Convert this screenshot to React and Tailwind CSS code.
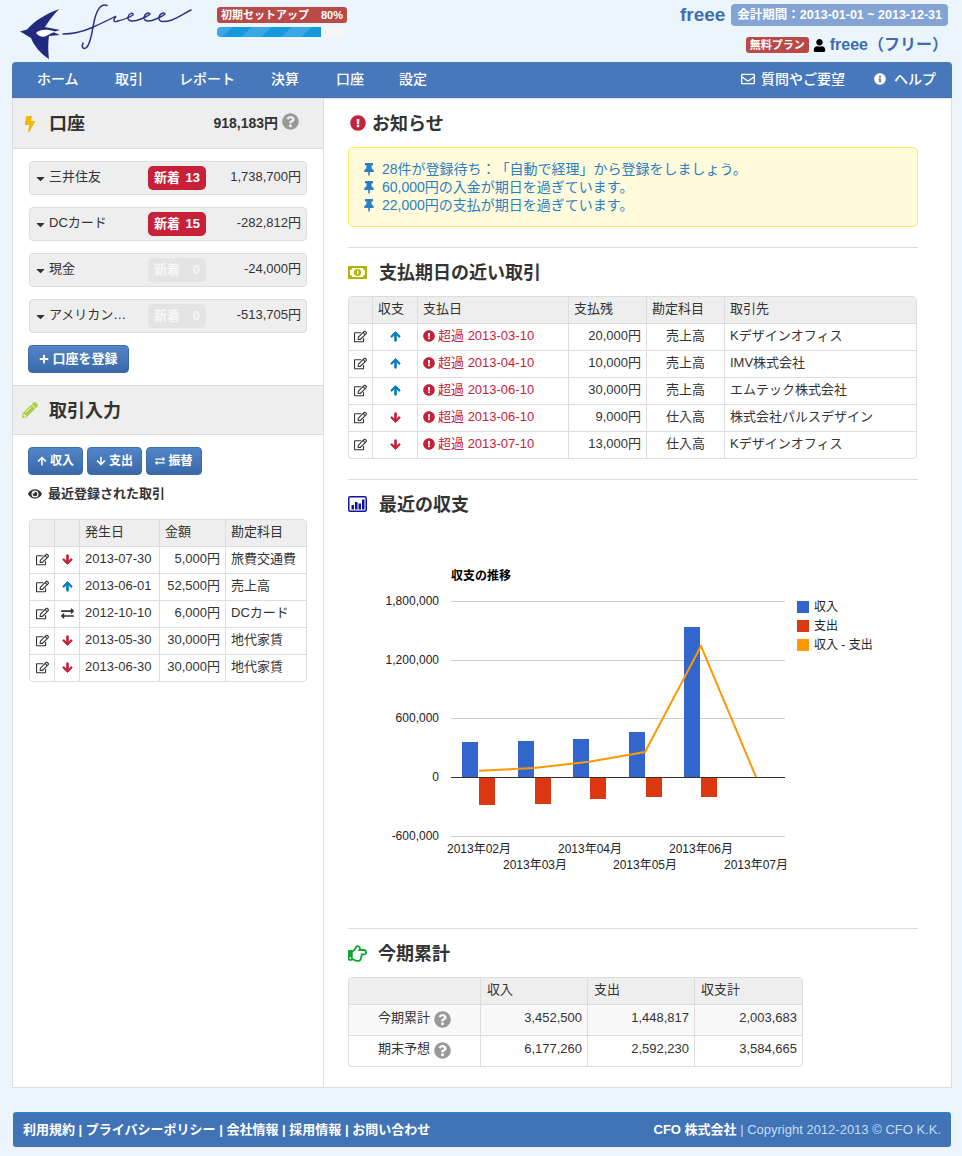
import {
  FaBolt, FaQuestionCircle, FaCaretDown, FaPlus, FaPencilAlt, FaArrowUp, FaArrowDown,
  FaExchangeAlt, FaEye, FaRegEdit, FaThumbtack, FaExclamationCircle,
  FaRegHandPointRight, FaUser, FaInfoCircle, FaRegEnvelope,
} from "react-icons/fa";

const ACCOUNTS = [
  { name: "三井住友", count: 13, amount: "1,738,700円" },
  { name: "DCカード", count: 15, amount: "-282,812円" },
  { name: "現金", count: 0, amount: "-24,000円" },
  { name: "アメリカン…", count: 0, amount: "-513,705円" },
];

const RECENT = [
  { dir: "down", date: "2013-07-30", amount: "5,000円", item: "旅費交通費" },
  { dir: "up", date: "2013-06-01", amount: "52,500円", item: "売上高" },
  { dir: "swap", date: "2012-10-10", amount: "6,000円", item: "DCカード" },
  { dir: "down", date: "2013-05-30", amount: "30,000円", item: "地代家賃" },
  { dir: "down", date: "2013-06-30", amount: "30,000円", item: "地代家賃" },
];

const DUE = [
  { dir: "up", date: "2013-03-10", amount: "20,000円", item: "売上高", partner: "Kデザインオフィス" },
  { dir: "up", date: "2013-04-10", amount: "10,000円", item: "売上高", partner: "IMV株式会社" },
  { dir: "up", date: "2013-06-10", amount: "30,000円", item: "売上高", partner: "エムテック株式会社" },
  { dir: "down", date: "2013-06-10", amount: "9,000円", item: "仕入高", partner: "株式会社パルスデザイン" },
  { dir: "down", date: "2013-07-10", amount: "13,000円", item: "仕入高", partner: "Kデザインオフィス" },
];

const BARS = [
  { x: 462, top: 742, bottom: 805 },
  { x: 518, top: 741, bottom: 804 },
  { x: 573, top: 739, bottom: 799 },
  { x: 629, top: 732, bottom: 797 },
  { x: 684, top: 627, bottom: 797 },
];

const Y_AXIS = [
  { y: 601, label: "1,800,000" },
  { y: 660, label: "1,200,000" },
  { y: 718, label: "600,000" },
  { y: 836, label: "-600,000" },
];

const X_AXIS = [
  { x: 479, y: 853, label: "2013年02月" },
  { x: 535, y: 869, label: "2013年03月" },
  { x: 590, y: 853, label: "2013年04月" },
  { x: 645, y: 869, label: "2013年05月" },
  { x: 701, y: 853, label: "2013年06月" },
  { x: 756, y: 869, label: "2013年07月" },
];

function Logo() {
  return (
    <svg width="190" height="62" viewBox="0 0 190 62" className="ml-[12px] shrink-0">
      <path fill="#222a80" d="M8 31.5 L15 29.5 C22 21 34 14 47 9 C41 15 36 22 33 27 L48 30 L41 32 L48 35 L37 36 C36 42 36 52 37 59 C29 54 22 46 19 38 C15 36 11 33 8 31.5 Z" />
      <path fill="#fff" d="M24 33 C28 29 36 29 43 31.5 L36 35 C32 38 27 37 24 33 Z" />
      <path fill="none" stroke="#2a3088" strokeWidth="1.5" strokeLinecap="round" d="M51 34 C62 34 72 31 79 28 M95 5.5 C88 3 84 12 82 22 C80 32 79 42 75 47 C72 50 69 48 71 43" />
      <path fill="none" stroke="#2a3088" strokeWidth="1.4" strokeLinecap="round" d="M79 28 C88 24 97 20 104 16 C101 20 101 23 106 21 C110 20 118 17 121 15 C122 12 117 13 116 17 C115 22 122 22 129 19 C134 17 137 15 138 14 C138 12 133 13 132 17 C131 22 138 22 144 19 C149 17 152 15 153 14 C153 12 148 13 147 17 C146 23 153 22 160 20 C167 17 173 13 179 10" />
    </svg>
  );
}

function Header() {
  return (
    <div className="flex h-[62px] justify-between pr-[14px]">
      <div className="flex">
        <Logo />
        <div className="ml-[15px] w-[130px] pt-[7px]">
          <div className="flex h-[16px] items-center justify-between rounded-[3px] bg-[#b94a48] px-[4px] text-[11px] font-bold text-white">
            <span>初期セットアップ</span>
            <span>80%</span>
          </div>
          <div className="mt-[4px] h-[10px] overflow-hidden rounded-[4px] bg-[#f5f5f5]">
            <div className="h-full w-[80%] bg-[repeating-linear-gradient(-45deg,#149bdf_0,#149bdf_14px,#3aa9e3_14px,#3aa9e3_28px)]" />
          </div>
        </div>
      </div>
      <div className="flex flex-col items-end pt-[4px]">
        <div className="flex h-[22px] items-center">
          <span className="text-[19px] font-bold text-[#3f6fb0]">freee</span>
          <span className="ml-[6px] flex h-[22px] items-center rounded-[4px] bg-[#83a4d4] px-[6px] text-[12.5px] font-bold text-white">
            会計期間：2013-01-01 ~ 2013-12-31
          </span>
        </div>
        <div className="mt-[11px] flex h-[16px] items-center">
          <span className="flex h-[16px] items-center rounded-[3px] bg-[#b94a48] px-[4px] text-[11px] font-bold text-white">無料プラン</span>
          <FaUser className="ml-[4px] text-[13px] text-black" />
          <span className="ml-[4px] text-[16px] font-bold text-[#3d6cb0]">freee（フリー）</span>
        </div>
      </div>
    </div>
  );
}

function Nav() {
  return (
    <div className="ml-[12px] mr-[10px] flex h-[36px] items-center justify-between rounded-t-[4px] bg-[#4878bc] pb-[2px] pl-[25px] pr-[16px] text-[14px] font-medium text-white">
      <div className="flex">
        <span className="w-[78px]">ホーム</span>
        <span className="w-[64px]">取引</span>
        <span className="w-[92px]">レポート</span>
        <span className="w-[65px]">決算</span>
        <span className="w-[63px]">口座</span>
        <span>設定</span>
      </div>
      <div className="flex items-center">
        <FaRegEnvelope className="text-[14px]" />
        <span className="ml-[6px]">質問やご要望</span>
        <FaInfoCircle className="ml-[29px] text-[12px]" />
        <span className="ml-[8px]">ヘルプ</span>
      </div>
    </div>
  );
}

function DirIcon({ dir }) {
  if (dir === "up") return <FaArrowUp className="mx-auto stroke-current stroke-[40] text-[11px] text-[#0480be]" />;
  if (dir === "down") return <FaArrowDown className="mx-auto stroke-current stroke-[40] text-[11px] text-[#c7213a]" />;
  return <FaExchangeAlt className="mx-auto text-[13px] text-[#333]" />;
}

function Help() {
  return <FaQuestionCircle className="inline-block text-[17px] text-[#999]" />;
}

function MoneyIcon() {
  return (
    <svg width="19" height="13" viewBox="0 0 19 13" className="shrink-0">
      <rect width="19" height="13" fill="#b3b300" />
      <path fill="#fff" d="M4 2 H15 C15 3.500 16 4 17 4 V9 C16 9 15 9.500 15 11 H4 C4 9.500 3 9 2 9 V4 C3 4 4 3.500 4 2 Z" />
      <circle cx="9.500" cy="6.500" r="3.600" fill="#b3b300" />
      <rect x="9" y="4.500" width="1.400" height="4" fill="#fff" />
    </svg>
  );
}

function ChartIcon() {
  return (
    <svg width="19" height="16" viewBox="0 0 19 16" className="shrink-0">
      <rect x="0.750" y="0.750" width="17.500" height="14.500" rx="1.500" fill="none" stroke="#12129a" strokeWidth="1.500" />
      <rect x="3.500" y="9" width="2.500" height="4.500" fill="#12129a" />
      <rect x="7" y="6" width="2.500" height="7.500" fill="#12129a" />
      <rect x="10.500" y="7.500" width="2.500" height="6" fill="#12129a" />
      <rect x="14" y="3.500" width="2.500" height="10" fill="#12129a" />
    </svg>
  );
}

function SideHeading({ icon, title, right, className }) {
  return (
    <div className={`flex h-[50px] items-center border-b border-[#ddd] bg-[#eee] ${className}`}>
      <span className="flex w-[36px] justify-center pr-[3px]">{icon}</span>
      <span className="pt-[2px] text-[18px] font-bold text-[#333]">{title}</span>
      {right}
    </div>
  );
}

function AccountRow({ account }) {
  const active = account.count > 0;
  return (
    <div className="flex h-[34px] items-center rounded-[4px] border border-[#ddd] bg-[#eee] pl-[6px] pr-[5px] text-[13px] text-[#333]">
      <FaCaretDown className="w-[9px] text-[13px]" />
      <span className="ml-[4px] w-[99px] truncate pb-[2px]">{account.name}</span>
      <span className={`flex h-[24px] w-[58px] items-center justify-between rounded-[5px] px-[6px] text-[13px] font-bold ${active ? "bg-[#c7213a] text-white" : "bg-[#e4e4e4] text-[#f7f7f7]"}`}>
        <span>新着</span>
        <span>{account.count}</span>
      </span>
      <span className="ml-auto pb-[2px]">{account.amount}</span>
    </div>
  );
}

function BlueButton({ className, children }) {
  return (
    <span className={`flex h-[28px] items-center justify-center gap-[3px] rounded-[4px] border border-[#3f6dab] bg-gradient-to-b from-[#5285c8] to-[#3a69a9] text-[12px] font-bold text-white ${className}`}>
      {children}
    </span>
  );
}

function Sidebar() {
  return (
    <div className="w-[311px] shrink-0 border-r border-[#ddd]">
      <SideHeading
        icon={<FaBolt className="text-[16px] text-[#f5b800]" />}
        title="口座"
        right={
          <span className="ml-auto flex items-center pr-[24px] text-[14px] font-bold text-[#333]">
            918,183円
            <span className="ml-[4px] flex -translate-y-[2px]"><Help /></span>
          </span>
        }
      />
      <div className="px-[15px] pb-[12px] pt-[12px]">
        <div className="ml-[1px] flex w-[278px] flex-col gap-[12px]">
          {ACCOUNTS.map((a) => <AccountRow key={a.name} account={a} />)}
        </div>
        <BlueButton className="mt-[12px] w-[101px] text-[13px]">
          <FaPlus className="text-[10px]" />
          口座を登録
        </BlueButton>
      </div>
      <SideHeading
        className="border-t"
        icon={<FaPencilAlt className="text-[16px] text-[#a9d03f]" />}
        title="取引入力"
      />
      <div className="px-[15px] pt-[12px]">
        <div className="flex gap-[4px]">
          <BlueButton className="w-[55px]"><FaArrowUp className="text-[10px]" />収入</BlueButton>
          <BlueButton className="w-[55px]"><FaArrowDown className="text-[10px]" />支出</BlueButton>
          <BlueButton className="w-[56px]"><FaExchangeAlt className="text-[10px]" />振替</BlueButton>
        </div>
        <div className="mt-[9px] flex h-[20px] items-center text-[13px] font-bold text-[#333]">
          <FaEye className="text-[14px]" />
          <span className="ml-[6px]">最近登録された取引</span>
        </div>
        <div className="ml-[1px] mt-[15px] w-[278px] overflow-hidden rounded-[4px] border border-[#ddd]">
          <table className="w-full table-fixed border-separate border-spacing-0 text-[13px] text-[#333]">
            <colgroup>
              <col className="w-[24px]" />
              <col className="w-[25px]" />
              <col className="w-[80px]" />
              <col className="w-[66px]" />
              <col />
            </colgroup>
            <thead>
              <tr className="bg-[#eee] text-left font-normal">
                <th className="h-[26px] font-normal" />
                <th className="h-[26px] border-l border-[#ddd] font-normal" />
                <th className="h-[26px] border-l border-[#ddd] pb-[2px] pl-[5px] font-normal">発生日</th>
                <th className="h-[26px] border-l border-[#ddd] pb-[2px] pl-[5px] font-normal">金額</th>
                <th className="h-[26px] border-l border-[#ddd] pb-[2px] pl-[5px] font-normal">勘定科目</th>
              </tr>
            </thead>
            <tbody>
              {RECENT.map((r) => (
                <tr key={r.date}>
                  <td className="h-[27px] border-t border-[#ddd] pb-[2px]"><FaRegEdit className="mx-auto text-[13px]" /></td>
                  <td className="h-[27px] border-l border-t border-[#ddd] pb-[2px]"><DirIcon dir={r.dir} /></td>
                  <td className="h-[27px] whitespace-nowrap border-l border-t border-[#ddd] pb-[2px] pl-[5px]">{r.date}</td>
                  <td className="h-[27px] border-l border-t border-[#ddd] pb-[2px] pr-[5px] text-right">{r.amount}</td>
                  <td className="h-[27px] whitespace-nowrap border-l border-t border-[#ddd] pb-[2px] pl-[5px]">{r.item}</td>
                </tr>
              ))}
            </tbody>
          </table>
        </div>
      </div>
    </div>
  );
}

function Heading({ icon, title, gap }) {
  return (
    <div className="flex h-[48px] items-center">
      {icon}
      <span className={`${gap} pt-[2px] text-[18px] font-bold text-[#333]`}>{title}</span>
    </div>
  );
}

function Notices() {
  const lines = [
    "28件が登録待ち：「自動で経理」から登録をしましょう。",
    "60,000円の入金が期日を過ぎています。",
    "22,000円の支払が期日を過ぎています。",
  ];
  return (
    <div className="flex h-[80px] flex-col justify-center rounded-[5px] border border-[#fbeb6a] bg-[#fffbdb] pl-[15px] text-[14px] leading-[18px] text-[#2a7fc4]">
      {lines.map((line) => (
        <div key={line} className="flex items-center">
          <FaThumbtack className="w-[10px] text-[13px]" />
          <span className="ml-[8px]">{line}</span>
        </div>
      ))}
    </div>
  );
}

function DueTable() {
  return (
    <div className="w-[569px] overflow-hidden rounded-[4px] border border-[#ddd]">
      <table className="w-full table-fixed border-separate border-spacing-0 text-[13px] text-[#333]">
        <colgroup>
          <col className="w-[23px]" />
          <col className="w-[45px]" />
          <col className="w-[151px]" />
          <col className="w-[78px]" />
          <col className="w-[78px]" />
          <col />
        </colgroup>
        <thead>
          <tr className="bg-[#eee] text-left">
            <th className="h-[26px] font-normal" />
            <th className="h-[26px] border-l border-[#ddd] pb-[2px] pl-[5px] font-normal">収支</th>
            <th className="h-[26px] border-l border-[#ddd] pb-[2px] pl-[5px] font-normal">支払日</th>
            <th className="h-[26px] border-l border-[#ddd] pb-[2px] pl-[5px] font-normal">支払残</th>
            <th className="h-[26px] border-l border-[#ddd] pb-[2px] pl-[5px] font-normal">勘定科目</th>
            <th className="h-[26px] border-l border-[#ddd] pb-[2px] pl-[5px] font-normal">取引先</th>
          </tr>
        </thead>
        <tbody>
          {DUE.map((r) => (
            <tr key={r.date + r.amount}>
              <td className="h-[27px] border-t border-[#ddd] pb-[2px]"><FaRegEdit className="mx-auto text-[13px]" /></td>
              <td className="h-[27px] border-l border-t border-[#ddd] pb-[2px]"><DirIcon dir={r.dir} /></td>
              <td className="h-[27px] border-l border-t border-[#ddd] pb-[2px] pl-[5px] text-[#c7213a]">
                <span className="flex items-center">
                  <FaExclamationCircle className="text-[12px]" />
                  <span className="ml-[3px]">超過 {r.date}</span>
                </span>
              </td>
              <td className="h-[27px] border-l border-t border-[#ddd] pb-[2px] pr-[5px] text-right">{r.amount}</td>
              <td className="h-[27px] border-l border-t border-[#ddd] pb-[2px] pl-[19px]">{r.item}</td>
              <td className="h-[27px] whitespace-nowrap border-l border-t border-[#ddd] pb-[2px] pl-[5px]">{r.partner}</td>
            </tr>
          ))}
        </tbody>
      </table>
    </div>
  );
}

function Chart() {
  return (
    <svg width="570" height="400" viewBox="348 528 570 400" className="block text-[12px]" fill="#222">
      <text x="451" y="580" fontWeight="700" fill="#000">収支の推移</text>
      {Y_AXIS.map((t) => (
        <g key={t.y}>
          <line x1="451" x2="785" y1={t.y + 0.5} y2={t.y + 0.5} stroke="#ccc" />
          <text x="439" y={t.y + 4} textAnchor="end">{t.label}</text>
        </g>
      ))}
      <text x="439" y="781" textAnchor="end">0</text>
      {BARS.map((b) => (
        <g key={b.x}>
          <rect x={b.x} y={b.top} width="16" height={777 - b.top} fill="#3366cc" />
          <rect x={b.x + 17} y="777" width="16" height={b.bottom - 777} fill="#dc3912" />
        </g>
      ))}
      <line x1="451" x2="785" y1="777.5" y2="777.5" stroke="#333" />
      <polyline
        points="479,770.7 534,768 589,761.7 645,752 701,646 756,777"
        fill="none"
        stroke="#ff9900"
        strokeWidth="2"
      />
      {X_AXIS.map((t) => (
        <text key={t.label} x={t.x} y={t.y} textAnchor="middle">{t.label}</text>
      ))}
      <rect x="797" y="601" width="12" height="12" fill="#3366cc" />
      <text x="814" y="611">収入</text>
      <rect x="797" y="620" width="12" height="12" fill="#dc3912" />
      <text x="814" y="630">支出</text>
      <rect x="797" y="639" width="12" height="12" fill="#ff9900" />
      <text x="814" y="649">収入 - 支出</text>
    </svg>
  );
}

function SummaryTable() {
  const rows = [
    { label: "今期累計", values: ["3,452,500", "1,448,817", "2,003,683"], bg: "bg-[#f9f9f9]" },
    { label: "期末予想", values: ["6,177,260", "2,592,230", "3,584,665"], bg: "" },
  ];
  return (
    <div className="w-[455px] overflow-hidden rounded-[4px] border border-[#ddd]">
      <table className="w-full table-fixed border-separate border-spacing-0 text-[13px] text-[#333]">
        <colgroup>
          <col className="w-[131px]" />
          <col className="w-[107px]" />
          <col className="w-[107px]" />
          <col />
        </colgroup>
        <thead>
          <tr className="bg-[#eee] text-left">
            <th className="h-[26px] font-normal" />
            <th className="h-[26px] border-l border-[#ddd] pb-[2px] pl-[6px] font-normal">収入</th>
            <th className="h-[26px] border-l border-[#ddd] pb-[2px] pl-[6px] font-normal">支出</th>
            <th className="h-[26px] border-l border-[#ddd] pb-[2px] pl-[6px] font-normal">収支計</th>
          </tr>
        </thead>
        <tbody>
          {rows.map((r) => (
            <tr key={r.label} className={r.bg}>
              <td className="h-[31px] border-t border-[#ddd] pb-[4px]">
                <span className="flex items-center justify-center">
                  <span>{r.label}</span>
                  <span className="ml-[4px] flex translate-y-[1px]"><Help /></span>
                </span>
              </td>
              {r.values.map((v) => (
                <td key={v} className="h-[31px] border-l border-t border-[#ddd] pb-[4px] pr-[5px] text-right">{v}</td>
              ))}
            </tr>
          ))}
        </tbody>
      </table>
    </div>
  );
}

function Content() {
  return (
    <div className="flex-1 pb-[20px] pl-[24px] pr-[33px]">
      <Heading
        icon={<FaExclamationCircle className="ml-[2px] text-[16px] text-[#c7213a]" />}
        title="お知らせ"
        gap="ml-[6px]"
      />
      <Notices />
      <hr className="mt-[20px] border-[#ddd]" />
      <Heading icon={<MoneyIcon />} title="支払期日の近い取引" gap="ml-[12px]" />
      <DueTable />
      <hr className="mt-[20px] border-[#ddd]" />
      <Heading icon={<ChartIcon />} title="最近の収支" gap="ml-[12px]" />
      <Chart />
      <hr className="border-[#ddd]" />
      <Heading
        icon={<FaRegHandPointRight className="text-[19px] text-[#0ca82e]" />}
        title="今期累計"
        gap="ml-[11px]"
      />
      <SummaryTable />
    </div>
  );
}

function Footer() {
  return (
    <div className="ml-[13px] mr-[11px] mt-[24px] flex h-[35px] items-center justify-between rounded-[3px] border-t border-[#1a8fc9] bg-[#4173b7] px-[10px] text-[13px] font-bold text-white">
      <span>利用規約 | プライバシーポリシー | 会社情報 | 採用情報 | お問い合わせ</span>
      <span>
        CFO 株式会社 <span className="font-normal text-[#c5dcf2]">| Copyright 2012-2013 © CFO K.K.</span>
      </span>
    </div>
  );
}

export default function App() {
  return (
    <div className="h-[1156px] overflow-hidden bg-[#ecf5fc] [font-family:'Liberation_Sans','Noto_Sans_CJK_JP',sans-serif] [text-spacing-trim:space-all]">
      <Header />
      <Nav />
      <div className="ml-[12px] mr-[10px] flex h-[990px] border border-[#ddd] bg-white">
        <Sidebar />
        <Content />
      </div>
      <Footer />
    </div>
  );
}
